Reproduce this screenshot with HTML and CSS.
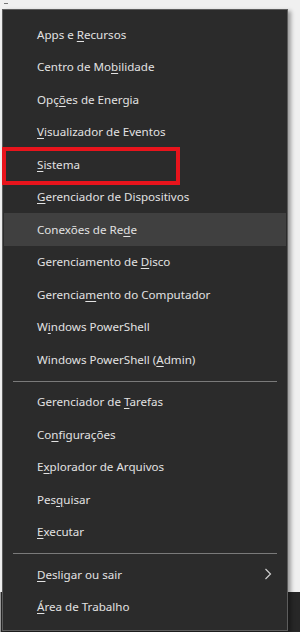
FILE: index.html
```html
<!DOCTYPE html>
<html lang="pt-BR">
<head>
    <meta charset="UTF-8">
    <meta name="viewport" content="width=device-width, initial-scale=1.0">
    <title>Menu Iniciar - Win+X</title>
    <link rel="stylesheet" href="styles.css">
</head>
<body>
    <div class="corner-mark"></div>
    <div class="taskbar"></div>

    <div class="winx-menu">
        <ul class="menu-group">
            <li class="menu-item"><span>Apps e <u>R</u>ecursos</span></li>
            <li class="menu-item"><span>Centro de Mo<u>b</u>ilidade</span></li>
            <li class="menu-item"><span>Opç<u>õ</u>es de Energia</span></li>
            <li class="menu-item"><span><u>V</u>isualizador de Eventos</span></li>
            <li class="menu-item highlighted"><span><u>S</u>istema</span></li>
            <li class="menu-item"><span><u>G</u>erenciador de Dispositivos</span></li>
            <li class="menu-item hover"><span>Conexões de Re<u>d</u>e</span></li>
            <li class="menu-item"><span>Gerenciamento de <u>D</u>isco</span></li>
            <li class="menu-item"><span>Gerencia<u>m</u>ento do Computador</span></li>
            <li class="menu-item"><span>W<u>i</u>ndows PowerShell</span></li>
            <li class="menu-item"><span>Windows PowerShell (<u>A</u>dmin)</span></li>
        </ul>
        <div class="separator"></div>
        <ul class="menu-group">
            <li class="menu-item"><span>Gerenciador de <u>T</u>arefas</span></li>
            <li class="menu-item"><span>Co<u>n</u>figurações</span></li>
            <li class="menu-item"><span>E<u>x</u>plorador de Arquivos</span></li>
            <li class="menu-item"><span>Pes<u>q</u>uisar</span></li>
            <li class="menu-item"><span><u>E</u>xecutar</span></li>
        </ul>
        <div class="separator"></div>
        <ul class="menu-group">
            <li class="menu-item">
                <span><u>D</u>esligar ou sair</span>
                <svg class="chevron" width="8" height="12" viewBox="0 0 8 12">
                    <path d="M1.5 1 L6.5 6 L1.5 11" fill="none" stroke="#cfcfcf" stroke-width="1.2"/>
                </svg>
            </li>
            <li class="menu-item"><span><u>Á</u>rea de Trabalho</span></li>
        </ul>
    </div>
</body>
</html>
```

FILE: styles.css
```css
* {
    margin: 0;
    padding: 0;
    box-sizing: border-box;
}

body {
    font-family: 'Noto Sans', 'Open Sans', sans-serif;
    background-color: #f0f0f0;
    width: 300px;
    height: 632px;
    overflow: hidden;
    position: relative;
}

.corner-mark {
    position: absolute;
    top: 3px;
    left: 4px;
    width: 4px;
    height: 1px;
    background-color: #777;
}

.taskbar {
    position: absolute;
    left: 0;
    right: 0;
    bottom: 0;
    height: 40px;
    background-color: #272727;
    border-left: 1px solid #9a9a9a;
}

.winx-menu {
    position: relative;
    margin: 9px 0 0 2px;
    width: 286px;
    height: 622px;
    background-color: #2b2b2b;
    border: 1px solid #5d5d5d;
    padding: 8px 1px 0;
    box-shadow: 3px 2px 4px rgba(0, 0, 0, 0.35);
}

.menu-group {
    list-style: none;
}

.menu-item {
    height: 32.5px;
    display: flex;
    align-items: center;
    justify-content: space-between;
    padding: 0 14px 0 33px;
    font-size: 11.6px;
    color: #e2e2e2;
    white-space: nowrap;
}

.menu-item u {
    text-underline-offset: 2px;
}

.menu-item.hover {
    background-color: #404040;
}

/* caixa vermelha de destaque do print */
.menu-item.highlighted {
    position: relative;
}

.menu-item.highlighted::after {
    content: '';
    position: absolute;
    left: -2px;
    top: -1px;
    width: 178px;
    height: 38px;
    box-sizing: border-box;
    border: 4px solid #e8141c;
}

.separator {
    height: 1px;
    margin: 5px 9px 4px;
    background-color: #7a7a7a;
}

.chevron {
    display: block;
}
```
